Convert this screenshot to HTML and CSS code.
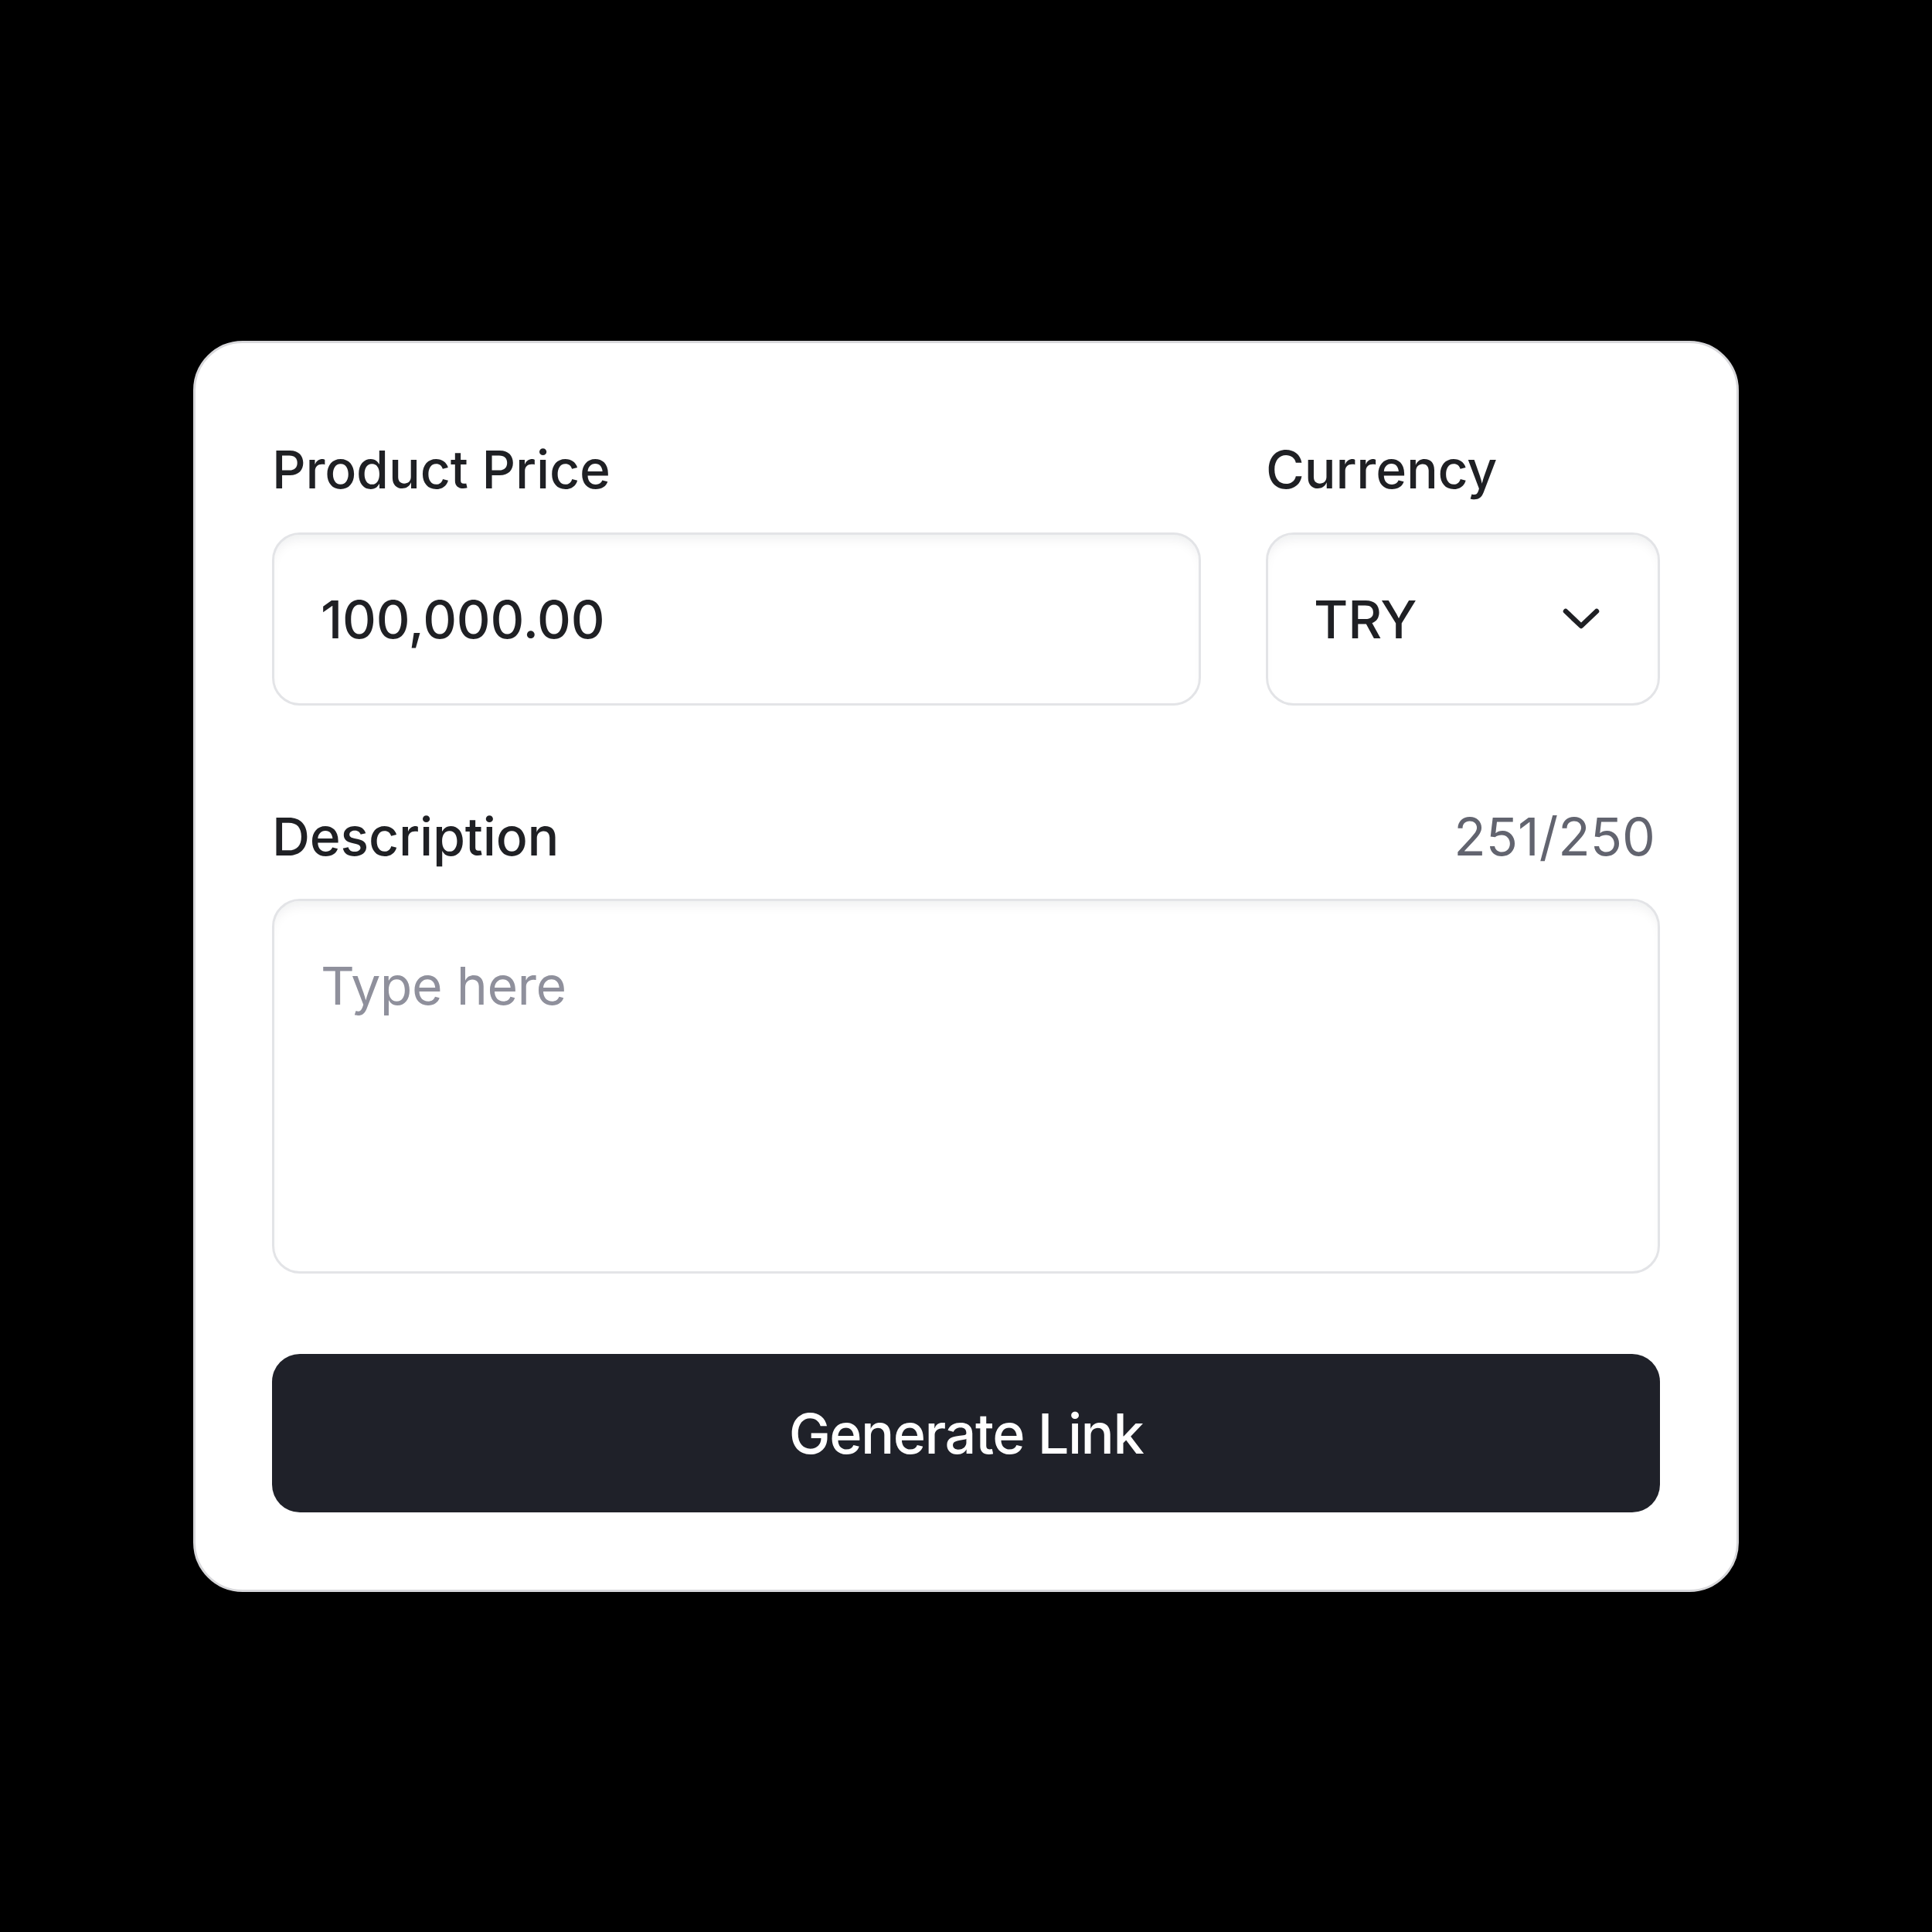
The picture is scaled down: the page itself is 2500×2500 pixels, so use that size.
FILE: index.html
```html
<!DOCTYPE html>
<html lang="en">
<head>
    <meta charset="UTF-8">
    <meta name="viewport" content="width=device-width, initial-scale=1.0">
    <title>Payment Link</title>
    <link rel="stylesheet" href="styles.css">
</head>
<body>
    <form class="card" onsubmit="return false">
        <div class="row">
            <div class="field price">
                <label class="label" for="price">Product Price</label>
                <input class="input" id="price" type="text" value="100,000.00">
            </div>
            <div class="field currency">
                <span class="label">Currency</span>
                <div class="input select">
                    <span>TRY</span>
                    <svg class="chevron" width="50" height="30" viewBox="0 0 50 30" fill="none">
                        <polyline points="5,5 25,24 45,5" stroke="#1f2024" stroke-width="6.5" stroke-linecap="round" stroke-linejoin="round"/>
                    </svg>
                </div>
            </div>
        </div>

        <div class="field description">
            <div class="label-row">
                <label class="label" for="description">Description</label>
                <span class="counter">251/250</span>
            </div>
            <textarea class="input textarea" id="description" placeholder="Type here"></textarea>
        </div>

        <button class="generate" type="submit">Generate Link</button>
    </form>
</body>
</html>
```

FILE: styles.css
```css
body {
    margin: 0;
    min-height: 100vh;
    display: flex;
    justify-content: center;
    align-items: center;
    background-color: #000000;
    font-family: Inter, "Liberation Sans", Arial, sans-serif;
    color: #1f2024;
}

.card {
    box-sizing: border-box;
    width: 2000px;
    padding: 123px 99px 100px;
    background: #ffffff;
    border: 3px solid #d8d8db;
    border-radius: 64px;
    display: flex;
    flex-direction: column;
}

.row {
    display: flex;
    gap: 84px;
}

.field {
    display: flex;
    flex-direction: column;
    gap: 42px;
}

.price {
    flex: 1;
}

.currency {
    width: 510px;
}

.label {
    font-size: 68px;
    line-height: 80px;
    font-weight: 500;
    letter-spacing: -0.2px;
}

.input {
    box-sizing: border-box;
    width: 100%;
    height: 224px;
    margin: 0;
    padding: 0 60px;
    border: 3px solid #e3e4e7;
    border-radius: 36px;
    background: #ffffff;
    box-shadow: inset 0 12px 16px -8px rgba(16, 24, 40, 0.08);
    font-family: inherit;
    font-size: 68px;
    font-weight: 500;
    letter-spacing: -0.2px;
    color: #1f2024;
    outline: none;
}

.select {
    display: flex;
    align-items: center;
    justify-content: space-between;
    padding: 0 74px 0 59px;
}

.chevron {
    display: block;
}

.description {
    margin-top: 129px;
    gap: 41px;
}

.label-row {
    display: flex;
    justify-content: space-between;
    align-items: baseline;
}

.counter {
    font-size: 68px;
    line-height: 80px;
    font-weight: 400;
    color: #62646f;
    padding-right: 6px;
}

.textarea {
    height: 485px;
    padding: 69px 60px;
    line-height: 80px;
    resize: none;
    display: block;
}

.textarea::placeholder {
    color: #8f909c;
    font-weight: 400;
    letter-spacing: -0.5px;
}

.generate {
    margin-top: 104px;
    height: 205px;
    border: none;
    border-radius: 36px;
    background-color: #1f2129;
    color: #ffffff;
    font-family: inherit;
    font-size: 72px;
    font-weight: 500;
    letter-spacing: -1.5px;
    cursor: pointer;
}
```
